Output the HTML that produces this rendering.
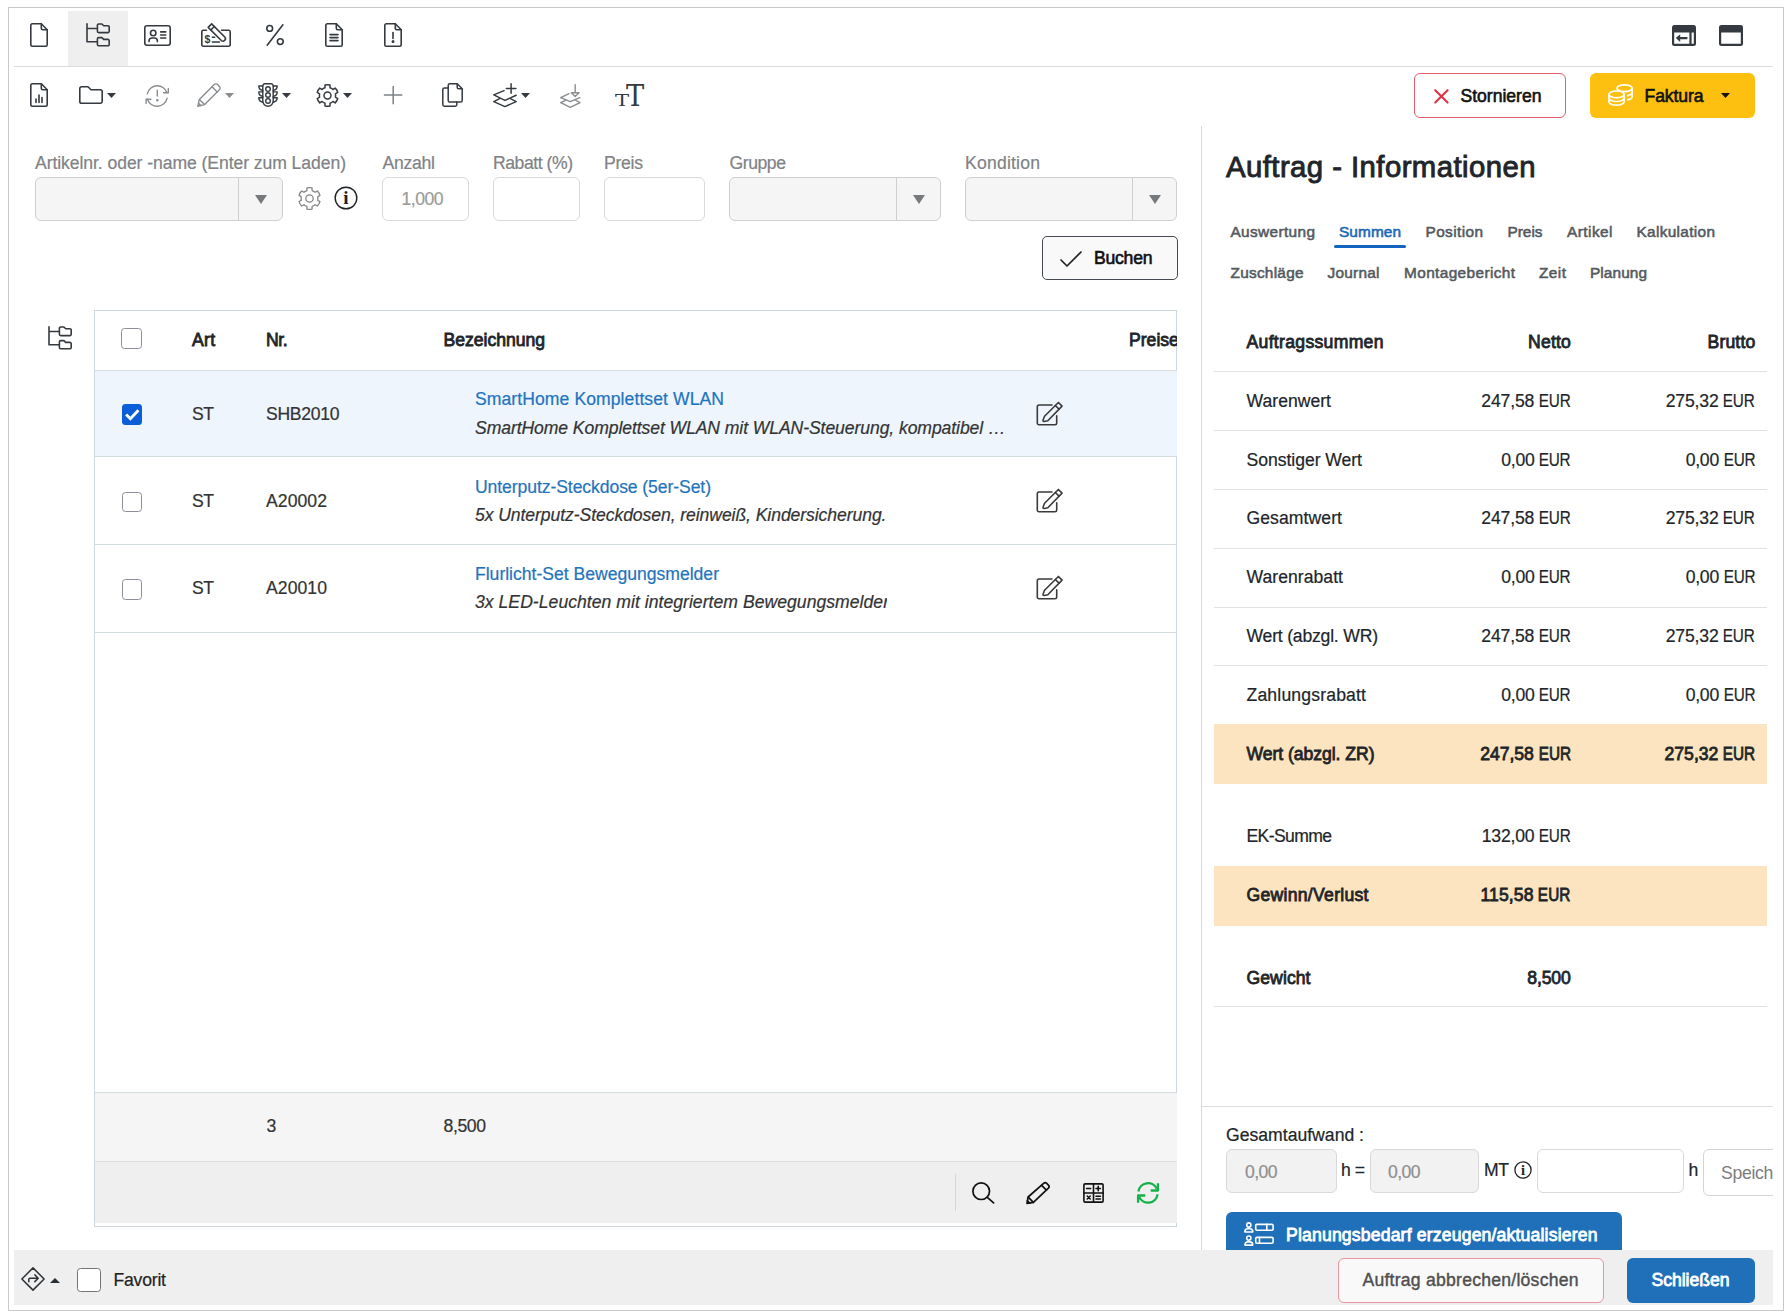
<!DOCTYPE html>
<html lang="de"><head><meta charset="utf-8"><title>Auftrag - Informationen</title>
<style>
html,body{margin:0;padding:0;background:#fff;}
body{width:1787px;height:1316px;position:relative;overflow:hidden;font-family:"Liberation Sans", sans-serif;}
div,svg{position:absolute;box-sizing:border-box;}
.t{height:30px;line-height:30px;white-space:nowrap;}
.eur{display:inline-block;transform:scaleX(.87);transform-origin:100% 50%;margin-left:-5px;}
.i{overflow:visible;fill:none;stroke:currentColor;color:#343a40;}
</style></head>
<body>
<div style="left:8px;top:7px;width:1776px;height:1304px;border:1px solid #c9c9c9;background:#fff;"></div>
<div style="left:68.2px;top:11px;width:59.5px;height:55px;background:#efefef;"></div>
<div style="left:14px;top:66px;width:1759px;height:1px;background:#dcdcdc;"></div>
<svg class="i" style="left:30px;top:23px;width:18px;height:24px;" viewBox="0 0 18 24" width="18" height="24"><g stroke-width="1.6" stroke-linecap="round" stroke-linejoin="round" ><path d="M2.300 .800h9l5.900 5.900v15a1.500 1.500 0 0 1-1.500 1.500H2.300a1.500 1.500 0 0 1-1.500-1.500V2.300A1.500 1.500 0 0 1 2.300 .800z"/><path d="M11.300 .800v4.400a1.500 1.500 0 0 0 1.500 1.500h4.400"/></g></svg>
<svg class="i" style="left:86px;top:23px;width:24px;height:24px;" viewBox="0 0 24 24" width="24" height="24"><g stroke-width="1.6" stroke-linecap="round" stroke-linejoin="round" ><path d="M1 .800v17.900h10M1 5.500h10"/><path d="M11.400 2.30a1.300 1.300 0 0 1 1.300-1.300h3.200l1.800 1.800h4.200a1.300 1.300 0 0 1 1.300 1.300v4.20a1.300 1.300 0 0 1-1.300 1.300H12.700a1.300 1.300 0 0 1-1.300-1.300z"/><path d="M11.400 15.90a1.300 1.300 0 0 1 1.300-1.300h3.200l1.800 1.800h4.200a1.300 1.300 0 0 1 1.300 1.300v3.80a1.300 1.300 0 0 1-1.300 1.300H12.700a1.300 1.300 0 0 1-1.300-1.300z"/></g></svg>
<svg class="i" style="left:144px;top:24.5px;width:27px;height:21px;" viewBox="0 0 27 21" width="27" height="21"><g stroke-width="1.6" stroke-linecap="round" stroke-linejoin="round" ><rect x=".8" y=".8" width="25.400" height="19.400" rx="2.200"/><circle cx="9.200" cy="8" r="2.700"/><path d="M5 16.600v-.600a3 3 0 0 1 3-3h2.400a3 3 0 0 1 3 3v.600"/><path d="M16.700 6.900h5M16.700 10h5M16.700 13h5"/></g></svg>
<svg class="i" style="left:201px;top:23px;width:30px;height:24px;" viewBox="0 0 30 24" width="30" height="24"><g stroke-width="1.6" stroke-linecap="round" stroke-linejoin="round" ><path d="M5.4 7.3H2.300A1.500 1.500 0 0 0 .800 8.800v12.900a1.500 1.500 0 0 0 1.500 1.500h25.400a1.500 1.500 0 0 0 1.500-1.500V8.800a1.500 1.500 0 0 0-1.500-1.500H20.600"/><path d="M10.63 0.87L23.78 14.02A2.45 2.45 0 0 1 20.32 17.48L7.17 4.33Z"/><path d="M13.32 3.55L9.85 7.02"/><path d="M11.400 14.300h2.200M11.400 19h7"/></g><text x="6.500" y="19.600" text-anchor="middle" font-family="Liberation Sans, sans-serif" font-weight="bold" font-size="10.500" fill="currentColor" stroke="none">$</text></svg>
<svg class="i" style="left:266px;top:24px;width:18px;height:22px;" viewBox="0 0 18 22" width="18" height="22"><g stroke-width="1.6" stroke-linecap="round" stroke-linejoin="round" ><circle cx="3.700" cy="4.400" r="2.900"/><circle cx="14.300" cy="17.600" r="2.900"/><path d="M16.900 .800L1.200 21.200"/></g></svg>
<svg class="i" style="left:325px;top:23px;width:18px;height:24px;" viewBox="0 0 18 24" width="18" height="24"><g stroke-width="1.6" stroke-linecap="round" stroke-linejoin="round" ><path d="M2.300 .800h9l5.900 5.900v15a1.500 1.500 0 0 1-1.500 1.500H2.300a1.500 1.500 0 0 1-1.500-1.500V2.300A1.500 1.500 0 0 1 2.300 .800z"/><path d="M11.300 .800v4.400a1.500 1.500 0 0 0 1.500 1.500h4.400"/><path d="M5 11.6h8M5 14.6h8M5 17.6h8"/></g></svg>
<svg class="i" style="left:384px;top:23px;width:18px;height:24px;" viewBox="0 0 18 24" width="18" height="24"><g stroke-width="1.6" stroke-linecap="round" stroke-linejoin="round" ><path d="M2.300 .800h9l5.900 5.900v15a1.500 1.500 0 0 1-1.500 1.500H2.300a1.500 1.500 0 0 1-1.500-1.500V2.300A1.500 1.500 0 0 1 2.300 .800z"/><path d="M11.300 .800v4.400a1.500 1.500 0 0 0 1.500 1.500h4.400"/><path d="M9 9.5v6"/><circle cx="9" cy="18.6" r=".7" fill="currentColor"/></g></svg>
<svg class="i" style="left:1672px;top:25.2px;width:24px;height:21px;" viewBox="0 0 24 21" width="24" height="21"><path d="M2.500 0h19A2.500 2.500 0 0 1 24 2.500v16a2.500 2.500 0 0 1-2.500 2.500h-19A2.500 2.500 0 0 1 0 18.500v-16A2.500 2.500 0 0 1 2.500 0zM2.200 7.500v11.300h15.200V7.500zM19.600 7.500v11.300h2.200V7.500z" fill="currentColor" stroke="none" fill-rule="evenodd"/><path d="M3.800 13.100l4.400-3.900v2.800h7.200v2.200H8.200v2.800z" fill="currentColor" stroke="none"/></svg>
<svg class="i" style="left:1719.2px;top:25.2px;width:24px;height:21px;" viewBox="0 0 24 21" width="24" height="21"><path d="M2.500 0h19A2.500 2.500 0 0 1 24 2.500v16a2.500 2.500 0 0 1-2.500 2.500h-19A2.500 2.500 0 0 1 0 18.500v-16A2.500 2.500 0 0 1 2.500 0zM2.200 7.500v11.300h19.600V7.500z" fill="currentColor" stroke="none" fill-rule="evenodd"/></svg>
<svg class="i" style="left:30px;top:83px;width:18px;height:24px;" viewBox="0 0 18 24" width="18" height="24"><g stroke-width="1.6" stroke-linecap="round" stroke-linejoin="round" ><path d="M2.300 .800h9l5.900 5.900v15a1.500 1.500 0 0 1-1.500 1.500H2.300a1.500 1.500 0 0 1-1.500-1.500V2.300A1.500 1.500 0 0 1 2.300 .800z"/><path d="M11.300 .800v4.400a1.500 1.500 0 0 0 1.500 1.500h4.400"/><path d="M6 19.5v-3.5M9 19.5v-7.5M12 19.5v-5"/></g></svg>
<svg class="i" style="left:79px;top:86px;width:24px;height:18px;" viewBox="0 0 24 18" width="24" height="18"><g stroke-width="1.6" stroke-linecap="round" stroke-linejoin="round" ><path d="M.8 2.600A1.800 1.800 0 0 1 2.600 .800h6.400l3 3h9.400a1.800 1.800 0 0 1 1.800 1.800v9.800a1.800 1.800 0 0 1-1.800 1.800H2.600a1.800 1.800 0 0 1-1.800-1.800z"/></g></svg>
<svg class="i" style="left:107.2px;top:93px;width:9px;height:5px;color:#343a40;" viewBox="0 0 9 5" width="9" height="5"><path d="M0 0h9L4.500 5z" fill="currentColor" stroke="none"/></svg>
<svg class="i" style="left:145px;top:85px;width:24px;height:22px;color:#8a8d90;" viewBox="0 0 24 22" width="24" height="22"><g stroke-width="1.4" stroke-linecap="round" stroke-linejoin="round" ><path d="M2.300 8.900A10.200 10.200 0 0 1 22 7.800"/><path d="M22.100 13.100A10.200 10.200 0 0 1 2.400 14.200"/><path d="M23.300 3.400v4.400h-4.800"/><path d="M1.100 18.600v-4.400h4.800"/><path d="M12.300 5.300v5.800"/><circle cx="12.300" cy="15.200" r=".600" fill="currentColor"/></g></svg>
<svg class="i" style="left:197px;top:83px;width:24px;height:24px;color:#8a8d90;" viewBox="0 0 24 24" width="24" height="24"><g stroke-width="1.4" stroke-linecap="round" stroke-linejoin="round" ><path d="M17.200 1.600a2.400 2.400 0 0 1 3.400 0l1.800 1.800a2.400 2.400 0 0 1 0 3.400L7.600 21.600.800 23.200l1.600-6.800z"/><path d="M15 3.800l5.200 5.200M2.400 16.400l5.200 5.200M1.600 20.200l2.200 2.200"/></g></svg>
<svg class="i" style="left:225px;top:93px;width:9px;height:5px;color:#8a8d90;" viewBox="0 0 9 5" width="9" height="5"><path d="M0 0h9L4.500 5z" fill="currentColor" stroke="none"/></svg>
<svg class="i" style="left:258px;top:83px;width:20px;height:24px;" viewBox="0 0 20 24" width="20" height="24"><g stroke-width="1.4" stroke-linecap="round" stroke-linejoin="round" ><path d="M6.800 .800h6.400a2 2 0 0 1 2 2v15.200a5.200 5.200 0 0 1-10.400 0V2.800a2 2 0 0 1 2-2z"/><circle cx="10" cy="6.100" r="2.300"/><circle cx="10" cy="12" r="2.300"/><circle cx="10" cy="17.900" r="2.300"/><path d="M4.800 3H.800c0 2.300 1.600 4 4 4.500M4.800 8.900H.800c0 2.300 1.600 4 4 4.500M4.800 14.800H.800c0 2.300 1.600 4 4 4.500"/><path d="M15.200 3h4c0 2.300-1.600 4-4 4.500M15.200 8.900h4c0 2.300-1.600 4-4 4.500M15.200 14.800h4c0 2.300-1.600 4-4 4.500"/></g></svg>
<svg class="i" style="left:282px;top:93px;width:9px;height:5px;color:#343a40;" viewBox="0 0 9 5" width="9" height="5"><path d="M0 0h9L4.500 5z" fill="currentColor" stroke="none"/></svg>
<svg class="i" style="left:315.5px;top:83.5px;width:23px;height:23px;" viewBox="0 0 23 23" width="23" height="23"><g stroke-width="1.5" stroke-linecap="round" stroke-linejoin="round" ><path d="M9.00 3.80L9.00 1.10A10.70 10.70 0 0 1 14.00 1.10L14.00 3.80A8.10 8.10 0 0 1 16.92 5.48L19.26 4.13A10.70 10.70 0 0 1 21.76 8.46L19.42 9.82A8.10 8.10 0 0 1 19.42 13.18L21.76 14.54A10.70 10.70 0 0 1 19.26 18.87L16.92 17.52A8.10 8.10 0 0 1 14.00 19.20L14.00 21.90A10.70 10.70 0 0 1 9.00 21.90L9.00 19.20A8.10 8.10 0 0 1 6.08 17.52L3.74 18.87A10.70 10.70 0 0 1 1.24 14.54L3.58 13.18A8.10 8.10 0 0 1 3.58 9.82L1.24 8.46A10.70 10.70 0 0 1 3.74 4.13L6.08 5.48A8.10 8.10 0 0 1 9.00 3.80Z"/><circle cx="11.500" cy="11.500" r="3.500"/></g></svg>
<svg class="i" style="left:343.2px;top:93px;width:9px;height:5px;color:#343a40;" viewBox="0 0 9 5" width="9" height="5"><path d="M0 0h9L4.500 5z" fill="currentColor" stroke="none"/></svg>
<svg class="i" style="left:384px;top:86px;width:18px;height:18px;color:#7d8185;" viewBox="0 0 18 18" width="18" height="18"><g stroke-width="1.5" stroke-linecap="round" stroke-linejoin="round" ><path d="M9.200 .400v17.400M.400 9.100h17.400"/></g></svg>
<svg class="i" style="left:441.5px;top:83px;width:21px;height:24px;" viewBox="0 0 21 24" width="21" height="24"><g stroke-width="1.5" stroke-linecap="round" stroke-linejoin="round" ><path d="M7.800 .800h7.400l5 5v11.600a1.600 1.600 0 0 1-1.600 1.600H7.800a1.600 1.600 0 0 1-1.600-1.600V2.400A1.600 1.600 0 0 1 7.800 .800z"/><path d="M15.200 .800v3.400a1.600 1.600 0 0 0 1.600 1.600h3.400"/><path d="M6.200 5H2.400A1.600 1.600 0 0 0 .800 6.600v15a1.600 1.600 0 0 0 1.600 1.600h10.800a1.600 1.600 0 0 0 1.600-1.600V19"/></g></svg>
<svg class="i" style="left:492.5px;top:83px;width:24px;height:24px;" viewBox="0 0 24 24" width="24" height="24"><g stroke-width="1.5" stroke-linecap="round" stroke-linejoin="round" ><path d="M11 7.600L.800 11.900 11.900 17.400 23.200 12.200"/><path d="M6.600 15.700L.800 18.600l11.100 5 11.300-5-5.800-2.900"/><path d="M18.100 .800v9.400M13.300 5.400h9.600"/></g></svg>
<svg class="i" style="left:520.5px;top:93px;width:9px;height:5px;color:#343a40;" viewBox="0 0 9 5" width="9" height="5"><path d="M0 0h9L4.500 5z" fill="currentColor" stroke="none"/></svg>
<svg class="i" style="left:560px;top:84px;width:21px;height:24px;color:#8a8d90;" viewBox="0 0 21 24" width="21" height="24"><g stroke-width="1.4" stroke-linecap="round" stroke-linejoin="round" ><path d="M9 9.700L.700 13.600l9.600 4.100 9.500-4"/><path d="M5.500 16.300L.700 18.600l9.600 4.700 9.700-4.700-4.700-2.600"/><path d="M15.200 .600v8"/><path d="M11.400 8.800h7.600l-3.800 3.600z"/></g></svg>
<div class="t" style="left:614.500px;top:86px;font-family:'DejaVu Serif',serif;color:#343a40;font-size:16.100px;transform:scaleX(1.32);transform-origin:0 0;">T</div>
<div class="t" style="left:626.300px;top:80.900px;font-family:'DejaVu Serif',serif;font-stretch:condensed;color:#343a40;font-size:29.200px;transform:scaleX(1.04);transform-origin:0 0;">T</div>
<div style="left:1414px;top:73px;width:152px;height:45px;border:1px solid #e35d6a;border-radius:6px;background:#fff;"></div>
<svg class="i" style="left:1433.5px;top:88.5px;width:15px;height:15px;color:#dc3545;" viewBox="0 0 15 15" width="15" height="15"><g stroke-width="2.1" stroke-linecap="round" stroke-linejoin="round" ><path d="M1.200 1.200l12.400 12.400M13.600 1.200L1.200 13.600"/></g></svg>
<div class="t m" style="left:1460.5px;top:81.0px;font-size:17.6px;color:#111;-webkit-text-stroke:0.6px #111;letter-spacing:-0.021px;">Stornieren</div>
<div style="left:1590px;top:73.3px;width:165px;height:44.7px;border-radius:6px;background:#fdc010;"></div>
<svg class="i" style="left:1608px;top:84px;width:25px;height:22px;color:#fffdf5;" viewBox="0 0 25 22" width="25" height="22"><g stroke-width="1.7" stroke-linecap="round" stroke-linejoin="round" ><ellipse cx="16.500" cy="4.200" rx="7.600" ry="3.400"/><path d="M24.100 4.200v8.600c0 1.400-1.800 2.600-4.400 3.100M24.100 8.500c0 1.400-1.800 2.600-4.400 3.100"/><ellipse cx="8.500" cy="10.400" rx="7.600" ry="3.400"/><path d="M.900 10.400v7.400c0 1.900 3.400 3.400 7.600 3.400s7.600-1.500 7.600-3.400v-7.400M.900 14.100c0 1.900 3.400 3.400 7.600 3.400s7.600-1.500 7.600-3.400"/></g></svg>
<div class="t m" style="left:1644.5px;top:81.0px;font-size:17.6px;color:#111;-webkit-text-stroke:0.6px #111;letter-spacing:-0.109px;">Faktura</div>
<svg class="i" style="left:1721px;top:93px;width:9px;height:5px;color:#111;" viewBox="0 0 9 5" width="9" height="5"><path d="M0 0h9L4.500 5z" fill="currentColor" stroke="none"/></svg>
<div style="left:1201px;top:126px;width:1px;height:1124px;background:#d9d9d9;"></div>
<div class="t m" style="left:35px;top:147.7px;font-size:17.6px;color:#808285;-webkit-text-stroke:0.2px #808285;letter-spacing:-0.076px;">Artikelnr. oder -name (Enter zum Laden)</div>
<div class="t m" style="left:382.5px;top:147.7px;font-size:17.6px;color:#808285;-webkit-text-stroke:0.2px #808285;letter-spacing:-0.259px;">Anzahl</div>
<div class="t m" style="left:493px;top:147.7px;font-size:17.6px;color:#808285;-webkit-text-stroke:0.2px #808285;letter-spacing:-0.455px;">Rabatt (%)</div>
<div class="t m" style="left:604px;top:147.7px;font-size:17.6px;color:#808285;-webkit-text-stroke:0.2px #808285;letter-spacing:-0.273px;">Preis</div>
<div class="t m" style="left:729.5px;top:147.7px;font-size:17.6px;color:#808285;-webkit-text-stroke:0.2px #808285;letter-spacing:-0.438px;">Gruppe</div>
<div class="t m" style="left:965px;top:147.7px;font-size:17.6px;color:#808285;-webkit-text-stroke:0.2px #808285;letter-spacing:0.203px;">Kondition</div>
<div style="left:35px;top:177px;width:248px;height:44px;border:1px solid #cfcfcf;border-radius:6px;background:#f5f5f5;"></div>
<div style="left:238px;top:178px;width:1px;height:42px;background:#cfcfcf;"></div>
<svg class="i" style="left:254.7px;top:194.5px;width:12px;height:9px;color:#777a7d;" viewBox="0 0 12 9" width="12" height="9"><path d="M0 0h12L6 9z" fill="currentColor" stroke="none"/></svg>
<svg class="i" style="left:298px;top:187px;width:23px;height:23px;color:#868686;" viewBox="0 0 23 23" width="23" height="23"><g stroke-width="1.3" stroke-linecap="round" stroke-linejoin="round" ><path d="M8.90 3.51L8.96 0.90A10.90 10.90 0 0 1 14.04 0.90L14.10 3.51A8.40 8.40 0 0 1 17.12 5.26L19.41 4.00A10.90 10.90 0 0 1 21.95 8.40L19.72 9.75A8.40 8.40 0 0 1 19.72 13.25L21.95 14.60A10.90 10.90 0 0 1 19.41 19.00L17.12 17.74A8.40 8.40 0 0 1 14.10 19.49L14.04 22.10A10.90 10.90 0 0 1 8.96 22.10L8.90 19.49A8.40 8.40 0 0 1 5.88 17.74L3.59 19.00A10.90 10.90 0 0 1 1.05 14.60L3.28 13.25A8.40 8.40 0 0 1 3.28 9.75L1.05 8.40A10.90 10.90 0 0 1 3.59 4.00L5.88 5.26A8.40 8.40 0 0 1 8.90 3.51Z"/><circle cx="11.500" cy="11.500" r="3.700"/></g></svg>
<svg class="i" style="left:334.1px;top:186px;width:24px;height:24px;color:#1d2124;" viewBox="0 0 24 24" width="24" height="24"><g stroke-width="1.4" stroke-linecap="round" stroke-linejoin="round" ><circle cx="12" cy="12" r="10.800"/></g><text x="12" y="18.400" text-anchor="middle" font-family="Liberation Serif, serif" font-weight="bold" font-size="19" fill="currentColor" stroke="none">i</text></svg>
<div style="left:382px;top:177px;width:87px;height:44px;border:1px solid #d9d9d9;border-radius:6px;background:#fff;"></div>
<div class="t m" style="left:401.5px;top:184.4px;font-size:17.6px;color:#9b9b9b;-webkit-text-stroke:0.2px #9b9b9b;letter-spacing:-0.508px;">1,000</div>
<div style="left:492.5px;top:177px;width:87px;height:44px;border:1px solid #d9d9d9;border-radius:6px;background:#fff;"></div>
<div style="left:604px;top:177px;width:101px;height:44px;border:1px solid #d9d9d9;border-radius:6px;background:#fff;"></div>
<div style="left:729px;top:177px;width:212px;height:44px;border:1px solid #cfcfcf;border-radius:6px;background:#f5f5f5;"></div>
<div style="left:895.5px;top:178px;width:1px;height:42px;background:#cfcfcf;"></div>
<svg class="i" style="left:912.8px;top:194.5px;width:12px;height:9px;color:#777a7d;" viewBox="0 0 12 9" width="12" height="9"><path d="M0 0h12L6 9z" fill="currentColor" stroke="none"/></svg>
<div style="left:965px;top:177px;width:212px;height:44px;border:1px solid #cfcfcf;border-radius:6px;background:#f5f5f5;"></div>
<div style="left:1131.5px;top:178px;width:1px;height:42px;background:#cfcfcf;"></div>
<svg class="i" style="left:1148.8px;top:194.5px;width:12px;height:9px;color:#777a7d;" viewBox="0 0 12 9" width="12" height="9"><path d="M0 0h12L6 9z" fill="currentColor" stroke="none"/></svg>
<div style="left:1042px;top:236px;width:135.5px;height:44px;border:1.300px solid #454a50;border-radius:5px;background:#f9f9f9;"></div>
<svg class="i" style="left:1060px;top:251px;width:22px;height:16px;color:#222;" viewBox="0 0 22 16" width="22" height="16"><g stroke-width="1.7" stroke-linecap="round" stroke-linejoin="round" ><path d="M1 9l6 6L21 1"/></g></svg>
<div class="t m" style="left:1094px;top:243.2px;font-size:17.6px;color:#111;-webkit-text-stroke:0.6px #111;letter-spacing:-0.234px;">Buchen</div>
<svg class="i" style="left:47.5px;top:326px;width:24px;height:24px;" viewBox="0 0 24 24" width="24" height="24"><g stroke-width="1.6" stroke-linecap="round" stroke-linejoin="round" ><path d="M1 .800v17.900h10M1 5.500h10"/><path d="M11.400 2.30a1.300 1.300 0 0 1 1.300-1.300h3.200l1.800 1.800h4.200a1.300 1.300 0 0 1 1.300 1.300v4.20a1.300 1.300 0 0 1-1.300 1.300H12.700a1.300 1.300 0 0 1-1.300-1.300z"/><path d="M11.400 15.90a1.300 1.300 0 0 1 1.300-1.300h3.200l1.800 1.800h4.200a1.300 1.300 0 0 1 1.300 1.300v3.80a1.300 1.300 0 0 1-1.300 1.300H12.700a1.300 1.300 0 0 1-1.300-1.300z"/></g></svg>
<div style="left:94px;top:309.5px;width:1083.3px;height:917.2px;border:1px solid #cfd8dc;background:#fff;"></div>
<div style="left:95px;top:370px;width:1081.5px;height:1px;background:#d5dde1;"></div>
<div style="left:95px;top:371px;width:1081.5px;height:85.5px;background:#eef5fd;"></div>
<div style="left:95px;top:456px;width:1081.5px;height:1px;background:#d5dde1;"></div>
<div style="left:95px;top:544px;width:1081.5px;height:1px;background:#d5dde1;"></div>
<div style="left:95px;top:631.5px;width:1081.5px;height:1px;background:#d5dde1;"></div>
<div style="left:95px;top:1092px;width:1081.5px;height:1px;background:#d5dde1;"></div>
<div style="left:95px;top:1093px;width:1081.5px;height:68px;background:#f5f5f5;"></div>
<div style="left:95px;top:1161px;width:1081.5px;height:1px;background:#dcdcdc;"></div>
<div style="left:95px;top:1162px;width:1081.5px;height:60.8px;background:#efefef;"></div>
<div style="left:121.3px;top:328px;width:20.5px;height:20.5px;border:1.500px solid #8f8d99;border-radius:3.5px;background:#fff;"></div>
<div style="left:121.5px;top:404.2px;width:20.5px;height:20.5px;border-radius:3.5px;background:#0b5ed7;"><svg style="left:0;top:0;width:20.5px;height:20.5px;fill:none;stroke:#fff;stroke-width:2.800;stroke-linecap:butt;stroke-linejoin:miter" viewBox="0 0 20 20"><path d="M4 10.200l4.200 4.200L16 6.200"/></svg></div>
<div style="left:121.5px;top:491.7px;width:20.5px;height:20.5px;border:1.500px solid #8f8d99;border-radius:3.5px;background:#fff;"></div>
<div style="left:121.5px;top:579.3px;width:20.5px;height:20.5px;border:1.500px solid #8f8d99;border-radius:3.5px;background:#fff;"></div>
<div class="t m" style="left:192px;top:325.0px;font-size:17.6px;color:#212529;-webkit-text-stroke:0.8px #212529;letter-spacing:0.300px;">Art</div>
<div class="t m" style="left:266px;top:325.0px;font-size:17.6px;color:#212529;-webkit-text-stroke:0.8px #212529;letter-spacing:-0.400px;">Nr.</div>
<div class="t m" style="left:443.5px;top:325.0px;font-size:17.6px;color:#212529;-webkit-text-stroke:0.8px #212529;letter-spacing:-0.023px;">Bezeichnung</div>
<div class="t m" style="left:1129px;top:325.0px;font-size:17.6px;color:#212529;-webkit-text-stroke:0.8px #212529;width:48px;overflow:hidden;">Preise</div>
<div class="t m" style="left:192px;top:398.8px;font-size:17.6px;color:#333;-webkit-text-stroke:0.2px #333;letter-spacing:-0.400px;">ST</div>
<div class="t m" style="left:266px;top:398.8px;font-size:17.6px;color:#333;-webkit-text-stroke:0.2px #333;letter-spacing:-0.305px;">SHB2010</div>
<div class="t m" style="left:475px;top:384.3px;font-size:17.6px;color:#1f74bd;-webkit-text-stroke:0.2px #1f74bd;letter-spacing:0.065px;">SmartHome Komplettset WLAN</div>
<div class="t m" style="left:475px;top:412.8px;font-size:17.6px;color:#333;font-style:italic;-webkit-text-stroke:0.2px #333;letter-spacing:-0.092px;">SmartHome Komplettset WLAN mit WLAN-Steuerung, kompatibel …</div>
<svg class="i" style="left:1035.5px;top:401.0px;width:28px;height:25px;color:#3a3a3a;" viewBox="0 0 28 25" width="28" height="25"><g stroke-width="1.6" stroke-linecap="round" stroke-linejoin="round" ><path d="M16 4H3a1.700 1.700 0 0 0-1.700 1.700v16.400a1.700 1.700 0 0 0 1.700 1.700h16a1.700 1.700 0 0 0 1.700-1.700V14.800"/><path d="M26.050 5.170L11.800 19.800 8.200 20.500Q6.800 20.700 7 19.300L8.560 15.240 22.410 1.450z"/><path d="M19.340 4.450l3.640 3.720"/></g></svg>
<div class="t m" style="left:192px;top:485.8px;font-size:17.6px;color:#333;-webkit-text-stroke:0.2px #333;letter-spacing:-0.400px;">ST</div>
<div class="t m" style="left:266px;top:485.8px;font-size:17.6px;color:#333;-webkit-text-stroke:0.2px #333;letter-spacing:0.066px;">A20002</div>
<div class="t m" style="left:475px;top:471.7px;font-size:17.6px;color:#1f74bd;-webkit-text-stroke:0.2px #1f74bd;letter-spacing:-0.093px;">Unterputz-Steckdose (5er-Set)</div>
<div class="t m" style="left:475px;top:500.4px;font-size:17.6px;color:#333;font-style:italic;-webkit-text-stroke:0.2px #333;letter-spacing:-0.082px;">5x Unterputz-Steckdosen, reinweiß, Kindersicherung.</div>
<svg class="i" style="left:1035.5px;top:488.0px;width:28px;height:25px;color:#3a3a3a;" viewBox="0 0 28 25" width="28" height="25"><g stroke-width="1.6" stroke-linecap="round" stroke-linejoin="round" ><path d="M16 4H3a1.700 1.700 0 0 0-1.700 1.700v16.400a1.700 1.700 0 0 0 1.700 1.700h16a1.700 1.700 0 0 0 1.700-1.700V14.800"/><path d="M26.050 5.170L11.800 19.800 8.200 20.500Q6.800 20.700 7 19.300L8.560 15.240 22.410 1.450z"/><path d="M19.340 4.450l3.640 3.720"/></g></svg>
<div class="t m" style="left:192px;top:572.8px;font-size:17.6px;color:#333;-webkit-text-stroke:0.2px #333;letter-spacing:-0.400px;">ST</div>
<div class="t m" style="left:266px;top:572.8px;font-size:17.6px;color:#333;-webkit-text-stroke:0.2px #333;letter-spacing:0.066px;">A20010</div>
<div class="t m" style="left:475px;top:558.5px;font-size:17.6px;color:#1f74bd;-webkit-text-stroke:0.2px #1f74bd;letter-spacing:-0.017px;">Flurlicht-Set Bewegungsmelder</div>
<div class="t m" style="left:475px;top:587.3px;font-size:17.6px;color:#333;font-style:italic;-webkit-text-stroke:0.2px #333;letter-spacing:0.028px;width:411.5px;overflow:hidden;">3x LED-Leuchten mit integriertem Bewegungsmelder</div>
<svg class="i" style="left:1035.5px;top:575.0px;width:28px;height:25px;color:#3a3a3a;" viewBox="0 0 28 25" width="28" height="25"><g stroke-width="1.6" stroke-linecap="round" stroke-linejoin="round" ><path d="M16 4H3a1.700 1.700 0 0 0-1.700 1.700v16.400a1.700 1.700 0 0 0 1.700 1.700h16a1.700 1.700 0 0 0 1.700-1.700V14.800"/><path d="M26.050 5.170L11.800 19.800 8.200 20.500Q6.800 20.700 7 19.300L8.560 15.240 22.410 1.450z"/><path d="M19.340 4.450l3.640 3.720"/></g></svg>
<div class="t m" style="left:266.5px;top:1111.0px;font-size:17.6px;color:#333;-webkit-text-stroke:0.2px #333;">3</div>
<div class="t m" style="left:443.5px;top:1111.0px;font-size:17.6px;color:#333;-webkit-text-stroke:0.2px #333;letter-spacing:-0.383px;">8,500</div>
<div style="left:955px;top:1173.5px;width:1px;height:37.5px;background:#d6d6d6;"></div>
<svg class="i" style="left:971.5px;top:1182px;width:23px;height:22px;color:#111;" viewBox="0 0 23 22" width="23" height="22"><g stroke-width="1.7" stroke-linecap="round" stroke-linejoin="round" ><circle cx="9.200" cy="9.200" r="8.300"/><path d="M15.300 15.300l6.300 5.600"/></g></svg>
<svg class="i" style="left:1026px;top:1182px;width:24px;height:22px;color:#111;" viewBox="0 0 24 22" width="24" height="22"><g stroke-width="1.7" stroke-linecap="round" stroke-linejoin="round" ><path d="M17.600 1.400a2.200 2.200 0 0 1 3.100 0l1.700 1.700a2.200 2.200 0 0 1 0 3.100L7.400 20.300 1 21.400l1.100-6.400z"/><path d="M15.600 3.400l4.800 4.800M2.400 15.400l5 5M1.400 18.800l2.400 2.400"/></g></svg>
<svg class="i" style="left:1083px;top:1183px;width:21px;height:20px;color:#111;" viewBox="0 0 21 20" width="21" height="20"><g stroke-width="1.6" stroke-linecap="round" stroke-linejoin="round" ><rect x=".900" y=".900" width="19.200" height="18.200" rx="1.200"/><path d="M10.500 .900v18.200M.900 10h19.200"/><path d="M3.600 5.500h4M13 5.500h4.400M15.200 3.300v4.400M4.200 13l3 3M7.200 13l-3 3M13 13.200h4.400M13 16h4.400"/></g></svg>
<svg class="i" style="left:1137px;top:1182.2px;width:22px;height:22px;color:#14b148;" viewBox="0 0 22 22" width="22" height="22"><g stroke-width="2.3" stroke-linejoin="round" stroke-linecap="butt"><path d="M1.400 9.500A9.700 9.700 0 0 1 19.800 6.800"/><path d="M20.600 12.400A9.700 9.700 0 0 1 2.200 15.100"/><path d="M20.900 1.200v7.300h-7.200"/><path d="M1.100 20.800v-7.300h7.200"/></g></svg>
<div class="t m" style="left:1226px;top:152.0px;font-size:29.3px;color:#212529;-webkit-text-stroke:0.9px #212529;letter-spacing:0.448px;">Auftrag - Informationen</div>
<div class="t m" style="left:1230.5px;top:217.1px;font-size:15.4px;color:#54595e;-webkit-text-stroke:0.55px #54595e;letter-spacing:0.358px;">Auswertung</div>
<div class="t m" style="left:1339px;top:217.1px;font-size:15.4px;color:#1a66b8;-webkit-text-stroke:0.55px #1a66b8;letter-spacing:0.081px;">Summen</div>
<div style="left:1334px;top:245px;width:72px;height:3px;background:#1565c0;border-radius:1.500px;"></div>
<div class="t m" style="left:1425.5px;top:217.1px;font-size:15.4px;color:#54595e;-webkit-text-stroke:0.55px #54595e;letter-spacing:0.391px;">Position</div>
<div class="t m" style="left:1507.5px;top:217.1px;font-size:15.4px;color:#54595e;-webkit-text-stroke:0.55px #54595e;letter-spacing:-0.020px;">Preis</div>
<div class="t m" style="left:1567px;top:217.1px;font-size:15.4px;color:#54595e;-webkit-text-stroke:0.55px #54595e;letter-spacing:0.456px;">Artikel</div>
<div class="t m" style="left:1636.5px;top:217.1px;font-size:15.4px;color:#54595e;-webkit-text-stroke:0.55px #54595e;letter-spacing:0.320px;">Kalkulation</div>
<div class="t m" style="left:1230.5px;top:257.5px;font-size:15.4px;color:#54595e;-webkit-text-stroke:0.55px #54595e;letter-spacing:0.248px;">Zuschläge</div>
<div class="t m" style="left:1327.5px;top:257.5px;font-size:15.4px;color:#54595e;-webkit-text-stroke:0.55px #54595e;letter-spacing:0.253px;">Journal</div>
<div class="t m" style="left:1404px;top:257.5px;font-size:15.4px;color:#54595e;-webkit-text-stroke:0.55px #54595e;letter-spacing:0.377px;">Montagebericht</div>
<div class="t m" style="left:1539px;top:257.5px;font-size:15.4px;color:#54595e;-webkit-text-stroke:0.55px #54595e;letter-spacing:0.448px;">Zeit</div>
<div class="t m" style="left:1590px;top:257.5px;font-size:15.4px;color:#54595e;-webkit-text-stroke:0.55px #54595e;letter-spacing:0.086px;">Planung</div>
<div class="t m" style="left:1246.5px;top:327.0px;font-size:17.6px;color:#212529;-webkit-text-stroke:0.8px #212529;letter-spacing:0.309px;">Auftragssummen</div>
<div class="t m" style="right:216.04px;top:327.0px;font-size:17.6px;color:#212529;-webkit-text-stroke:0.8px #212529;letter-spacing:0.159px;">Netto</div>
<div class="t m" style="right:31.65px;top:327.0px;font-size:17.6px;color:#212529;-webkit-text-stroke:0.8px #212529;letter-spacing:0.149px;">Brutto</div>
<div style="left:1214px;top:371px;width:553px;height:1px;background:#e2e2e2;"></div>
<div style="left:1214px;top:430px;width:553px;height:1px;background:#e2e2e2;"></div>
<div style="left:1214px;top:489px;width:553px;height:1px;background:#e2e2e2;"></div>
<div style="left:1214px;top:548px;width:553px;height:1px;background:#e2e2e2;"></div>
<div style="left:1214px;top:607px;width:553px;height:1px;background:#e2e2e2;"></div>
<div style="left:1214px;top:665px;width:553px;height:1px;background:#e2e2e2;"></div>
<div style="left:1214px;top:724px;width:553px;height:1px;background:#e2e2e2;"></div>
<div style="left:1214px;top:724px;width:553px;height:59.5px;background:#fbe4bf;"></div>
<div style="left:1214px;top:866px;width:553px;height:59.5px;background:#fbe4bf;"></div>
<div style="left:1214px;top:1006px;width:553px;height:1px;background:#e2e2e2;"></div>
<div class="t m" style="left:1246.5px;top:386.0px;font-size:17.6px;color:#212529;-webkit-text-stroke:0.2px #212529;letter-spacing:0.012px;">Warenwert</div>
<div class="t m" style="right:216.35px;top:386.0px;font-size:17.6px;color:#212529;-webkit-text-stroke:0.2px #212529;letter-spacing:-0.151px;">247,58 <span class="eur">EUR</span></div>
<div class="t m" style="right:31.95px;top:386.0px;font-size:17.6px;color:#212529;-webkit-text-stroke:0.2px #212529;letter-spacing:-0.151px;">275,32 <span class="eur">EUR</span></div>
<div class="t m" style="left:1246.5px;top:444.7px;font-size:17.6px;color:#212529;-webkit-text-stroke:0.2px #212529;letter-spacing:-0.042px;">Sonstiger Wert</div>
<div class="t m" style="right:216.46px;top:444.7px;font-size:17.6px;color:#212529;-webkit-text-stroke:0.2px #212529;letter-spacing:-0.257px;">0,00 <span class="eur">EUR</span></div>
<div class="t m" style="right:32.06px;top:444.7px;font-size:17.6px;color:#212529;-webkit-text-stroke:0.2px #212529;letter-spacing:-0.257px;">0,00 <span class="eur">EUR</span></div>
<div class="t m" style="left:1246.5px;top:503.3px;font-size:17.6px;color:#212529;-webkit-text-stroke:0.2px #212529;letter-spacing:0.073px;">Gesamtwert</div>
<div class="t m" style="right:216.35px;top:503.3px;font-size:17.6px;color:#212529;-webkit-text-stroke:0.2px #212529;letter-spacing:-0.151px;">247,58 <span class="eur">EUR</span></div>
<div class="t m" style="right:31.95px;top:503.3px;font-size:17.6px;color:#212529;-webkit-text-stroke:0.2px #212529;letter-spacing:-0.151px;">275,32 <span class="eur">EUR</span></div>
<div class="t m" style="left:1246.5px;top:562.2px;font-size:17.6px;color:#212529;-webkit-text-stroke:0.2px #212529;letter-spacing:0.034px;">Warenrabatt</div>
<div class="t m" style="right:216.46px;top:562.2px;font-size:17.6px;color:#212529;-webkit-text-stroke:0.2px #212529;letter-spacing:-0.257px;">0,00 <span class="eur">EUR</span></div>
<div class="t m" style="right:32.06px;top:562.2px;font-size:17.6px;color:#212529;-webkit-text-stroke:0.2px #212529;letter-spacing:-0.257px;">0,00 <span class="eur">EUR</span></div>
<div class="t m" style="left:1246.5px;top:621.0px;font-size:17.6px;color:#212529;-webkit-text-stroke:0.2px #212529;letter-spacing:-0.205px;">Wert (abzgl. WR)</div>
<div class="t m" style="right:216.35px;top:621.0px;font-size:17.6px;color:#212529;-webkit-text-stroke:0.2px #212529;letter-spacing:-0.151px;">247,58 <span class="eur">EUR</span></div>
<div class="t m" style="right:31.95px;top:621.0px;font-size:17.6px;color:#212529;-webkit-text-stroke:0.2px #212529;letter-spacing:-0.151px;">275,32 <span class="eur">EUR</span></div>
<div class="t m" style="left:1246.5px;top:680.0px;font-size:17.6px;color:#212529;-webkit-text-stroke:0.2px #212529;letter-spacing:0.163px;">Zahlungsrabatt</div>
<div class="t m" style="right:216.46px;top:680.0px;font-size:17.6px;color:#212529;-webkit-text-stroke:0.2px #212529;letter-spacing:-0.257px;">0,00 <span class="eur">EUR</span></div>
<div class="t m" style="right:32.06px;top:680.0px;font-size:17.6px;color:#212529;-webkit-text-stroke:0.2px #212529;letter-spacing:-0.257px;">0,00 <span class="eur">EUR</span></div>
<div class="t m" style="left:1246.5px;top:739.2px;font-size:17.6px;color:#212529;-webkit-text-stroke:0.8px #212529;letter-spacing:-0.048px;">Wert (abzgl. ZR)</div>
<div class="t m" style="right:216.23px;top:739.2px;font-size:17.6px;color:#212529;-webkit-text-stroke:0.8px #212529;letter-spacing:-0.029px;">247,58 <span class="eur">EUR</span></div>
<div class="t m" style="right:31.83px;top:739.2px;font-size:17.6px;color:#212529;-webkit-text-stroke:0.8px #212529;letter-spacing:-0.029px;">275,32 <span class="eur">EUR</span></div>
<div class="t m" style="left:1246.5px;top:821.3px;font-size:17.6px;color:#212529;-webkit-text-stroke:0.2px #212529;letter-spacing:-0.636px;">EK-Summe</div>
<div class="t m" style="right:216.41px;top:821.3px;font-size:17.6px;color:#212529;-webkit-text-stroke:0.2px #212529;letter-spacing:-0.207px;">132,00 <span class="eur">EUR</span></div>
<div class="t m" style="left:1246.5px;top:880.0px;font-size:17.6px;color:#212529;-webkit-text-stroke:0.8px #212529;letter-spacing:0.282px;">Gewinn/Verlust</div>
<div class="t m" style="right:216.12px;top:880.0px;font-size:17.6px;color:#212529;-webkit-text-stroke:0.8px #212529;letter-spacing:0.082px;">115,58 <span class="eur">EUR</span></div>
<div class="t m" style="left:1246.5px;top:962.5px;font-size:17.6px;color:#212529;-webkit-text-stroke:0.8px #212529;letter-spacing:0.073px;">Gewicht</div>
<div class="t m" style="right:216.33px;top:962.5px;font-size:17.6px;color:#212529;-webkit-text-stroke:0.8px #212529;letter-spacing:-0.133px;">8,500</div>
<div style="left:1202px;top:1106px;width:571px;height:1px;background:#dedede;"></div>
<div class="t m" style="left:1226px;top:1119.5px;font-size:17.6px;color:#212529;-webkit-text-stroke:0.2px #212529;letter-spacing:0.008px;">Gesamtaufwand :</div>
<div style="left:1226px;top:1149px;width:110.5px;height:44px;border:1px solid #d9d9d9;border-radius:6px;background:#f2f2f2;"></div>
<div class="t m" style="left:1245px;top:1156.7px;font-size:17.6px;color:#8e8e8e;-webkit-text-stroke:0.2px #8e8e8e;letter-spacing:-0.583px;">0,00</div>
<div class="t m" style="left:1341px;top:1155.0px;font-size:17.6px;color:#212529;-webkit-text-stroke:0.2px #212529;letter-spacing:-0.400px;">h =</div>
<div style="left:1369.5px;top:1149px;width:109.5px;height:44px;border:1px solid #d9d9d9;border-radius:6px;background:#f2f2f2;"></div>
<div class="t m" style="left:1388px;top:1156.7px;font-size:17.6px;color:#8e8e8e;-webkit-text-stroke:0.2px #8e8e8e;letter-spacing:-0.583px;">0,00</div>
<div class="t m" style="left:1484px;top:1155.0px;font-size:17.6px;color:#212529;-webkit-text-stroke:0.2px #212529;letter-spacing:-0.400px;">MT</div>
<svg class="i" style="left:1514px;top:1161.3px;width:18px;height:18px;color:#222;" viewBox="0 0 18 18" width="18" height="18"><g stroke-width="1.3" stroke-linecap="round" stroke-linejoin="round" ><circle cx="9" cy="9" r="8.100"/></g><text x="9" y="13.800" text-anchor="middle" font-family="Liberation Serif, serif" font-weight="bold" font-size="14.500" fill="currentColor" stroke="none">i</text></svg>
<div style="left:1536.5px;top:1149px;width:147.5px;height:44px;border:1px solid #d9d9d9;border-radius:6px;background:#fff;"></div>
<div class="t m" style="left:1688.5px;top:1155.0px;font-size:17.6px;color:#212529;-webkit-text-stroke:0.2px #212529;">h</div>
<div style="left:1703px;top:1149px;width:70px;height:48px;overflow:hidden;"><div style="left:0;top:0;width:120px;height:47px;border:1px solid #d4d4d4;border-radius:6px;background:#fff;"></div><div class="t" style="left:18px;top:9px;font-size:17.600px;color:#7d7d7d;letter-spacing:-.300px;">Speichern</div></div>
<div style="left:1226px;top:1211.7px;width:396px;height:44px;background:#1f6fb9;border-radius:6px;"></div>
<svg class="i" style="left:1244.1px;top:1221.7px;width:30px;height:24px;color:#fff;" viewBox="0 0 30 24" width="30" height="24"><g stroke-width="1.6" stroke-linecap="round" stroke-linejoin="round" ><circle cx="4.800" cy="3" r="2.100"/><path d="M.900 10v-.400a2.800 2.800 0 0 1 2.800-2.800h2.200a2.800 2.800 0 0 1 2.800 2.800v.400z"/><rect x="11.700" y="2.400" width="17.400" height="5.800" rx="1.200"/><path d="M22.800 2.400v5.800"/><circle cx="4.800" cy="16.100" r="2.100"/><path d="M.900 23.100v-.400a2.800 2.800 0 0 1 2.800-2.800h2.200a2.800 2.800 0 0 1 2.800 2.800v.400z"/><rect x="11.700" y="15.400" width="17.400" height="5.900" rx="1.200"/><path d="M15.500 15.400v5.900"/></g></svg>
<div class="t m" style="left:1286px;top:1219.5px;font-size:17.6px;color:#fff;-webkit-text-stroke:0.8px #fff;letter-spacing:0.176px;">Planungsbedarf erzeugen/aktualisieren</div>
<div style="left:14px;top:1250px;width:1759px;height:55px;background:#efefef;"></div>
<svg class="i" style="left:21.3px;top:1266.8px;width:24px;height:24px;color:#2b3035;" viewBox="0 0 24 24" width="24" height="24"><g stroke-width="1.5" stroke-linecap="round" stroke-linejoin="round" ><path d="M12 .900L23.100 12 12 23.100 .900 12z"/><path d="M7.800 14.800v-2.200a1.400 1.400 0 0 1 1.400-1.400h7.600M13.800 7.800l3.400 3.400-3.400 3.400"/></g></svg>
<svg class="i" style="left:49.7px;top:1277.9px;width:10px;height:5px;color:#2b3035;" viewBox="0 0 10 5" width="10" height="5"><path d="M0 5h10L5 0z" fill="currentColor" stroke="none"/></svg>
<div style="left:77px;top:1268px;width:23.8px;height:23.8px;border:1.500px solid #767676;border-radius:3.500px;background:#fff;"></div>
<div class="t m" style="left:113.5px;top:1264.6px;font-size:17.6px;color:#222;-webkit-text-stroke:0.2px #222;letter-spacing:-0.214px;">Favorit</div>
<div style="left:1338px;top:1258px;width:266px;height:44.5px;border:1.300px solid #e7959e;border-radius:6px;background:#f9f9f9;"></div>
<div class="t m" style="left:1362.5px;top:1264.6px;font-size:17.6px;color:#4f4f4f;-webkit-text-stroke:0.4px #4f4f4f;letter-spacing:0.238px;">Auftrag abbrechen/löschen</div>
<div style="left:1627px;top:1258px;width:128px;height:44.5px;border-radius:6px;background:#1f6fb9;"></div>
<div class="t m" style="left:1651.5px;top:1264.6px;font-size:17.6px;color:#fff;-webkit-text-stroke:0.8px #fff;letter-spacing:-0.031px;">Schließen</div>
</body></html>
